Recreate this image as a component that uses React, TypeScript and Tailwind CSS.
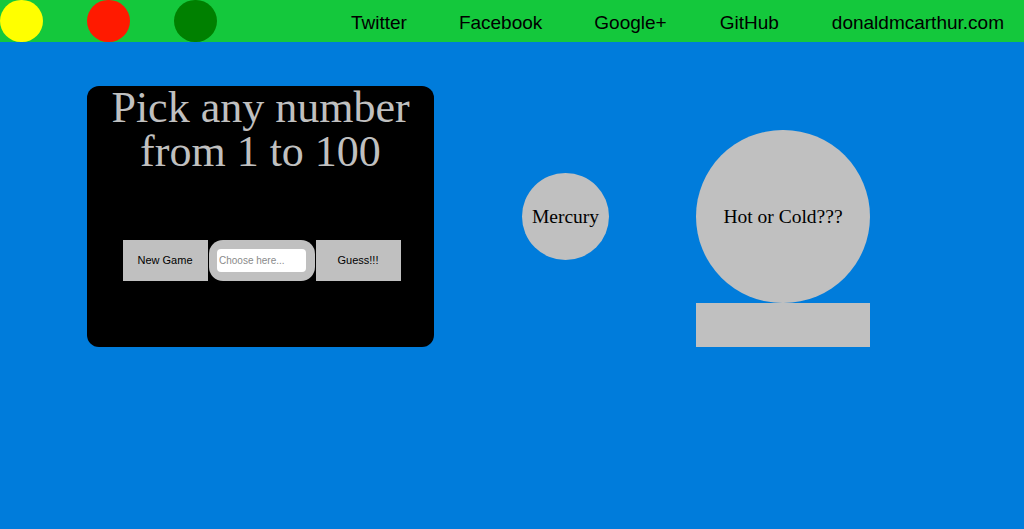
import React from "react";

export default function App() {
  const serif = { fontFamily: '"Liberation Serif", "Times New Roman", serif' };
  return (
    <div className="w-[1024px] h-[529px] bg-[#007cdb] overflow-hidden" style={{ fontFamily: '"Liberation Sans", Arial, sans-serif' }}>
      <header className="h-[42px] bg-[#14c83c] flex items-center">
        <div className="flex gap-[44px]">
          <div className="w-[43px] h-[42px] rounded-full bg-[#ffff00]" />
          <div className="w-[43px] h-[42px] rounded-full bg-[#ff1a00]" />
          <div className="w-[43px] h-[42px] rounded-full bg-[#008000]" />
        </div>
        <nav className="ml-auto mr-[20px] flex items-center text-[19px] text-black pt-[5px]">
          <span className="mr-[52px]">Twitter</span>
          <span className="mr-[52px]">Facebook</span>
          <span className="mr-[53px]">Google+</span>
          <span className="mr-[53px]">GitHub</span>
          <span>donaldmcarthur.com</span>
        </nav>
      </header>
      <main className="flex items-start">
        <section className="ml-[87px] mt-[44px] w-[347px] h-[261px] bg-black rounded-[12px] flex flex-col items-center">
          <h1 className="text-[44px] leading-[44px] text-[#c0c0c0] text-center" style={serif}>
            <span className="block">Pick any number</span>
            <span className="block">from 1 to 100</span>
          </h1>
          <div className="mt-[66px] ml-[2px] flex items-center text-[11px] text-black">
            <div className="w-[85px] h-[41px] bg-[#c0c0c0] flex items-center justify-center">New Game</div>
            <div className="ml-[1px] w-[106px] h-[41px] bg-[#c0c0c0] rounded-[14px] flex items-center justify-center">
              <input
                className="w-[89px] h-[23px] bg-white rounded-[4px] text-[10px] px-[2px] outline-none placeholder:text-[#8a8a8a]"
                placeholder="Choose here..."
              />
            </div>
            <div className="ml-[1px] w-[85px] h-[41px] bg-[#c0c0c0] flex items-center justify-center">Guess!!!</div>
          </div>
        </section>
        <div className="ml-[88px] mt-[131px] w-[87px] h-[87px] rounded-full bg-[#c0c0c0] flex items-center justify-center text-[19.5px] text-black" style={serif}>
          Mercury
        </div>
        <div className="ml-[87px] mt-[88px] flex flex-col">
          <div className="w-[174px] h-[173px] rounded-full bg-[#c0c0c0] flex items-center justify-center text-[19.5px] text-black" style={serif}>
            Hot or Cold???
          </div>
          <div className="w-[174px] h-[44px] bg-[#c0c0c0]" />
        </div>
      </main>
    </div>
  );
}
